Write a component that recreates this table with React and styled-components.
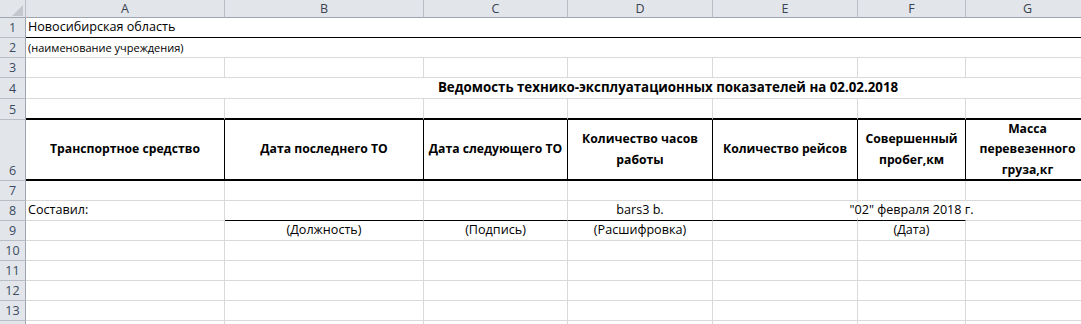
import React from "react";
import styled, { createGlobalStyle, css } from "styled-components";

const GlobalStyle = createGlobalStyle`
  html, body {
    margin: 0;
    padding: 0;
    background: #ffffff;
    overflow: hidden;
  }
  body {
    font-family: "Open Sans", "Liberation Sans", sans-serif;
    color: #000;
  }
`;

const TRACKS = "26px 199px 199px 144px 145px 145px 108px 124px";
const GRID = "#d9d9d9";
const HEAD_BORDER = "#b9bec6";
const HEAD_BG = "#e2e5e9";

const Sheet = styled.div`
  display: flex;
  flex-direction: column;
  width: max-content;
`;

const Row = styled.div`
  display: grid;
  grid-template-columns: ${TRACKS};
  grid-template-rows: ${(p) => p.$h}px;
  height: ${(p) => p.$h}px;
  flex: none;
`;

const Corner = styled.div`
  box-sizing: border-box;
  background: ${HEAD_BG};
  border-right: 1px solid ${HEAD_BORDER};
  border-bottom: 1px solid #9ea5ae;
  display: flex;
  align-items: flex-end;
  justify-content: flex-end;
  padding: 0 2px 1px 0;
`;

const CornerMark = styled.span`
  width: 0;
  height: 0;
  border-left: 11px solid transparent;
  border-bottom: 11px solid #c3c7cd;
`;

const ColHead = styled.div`
  box-sizing: border-box;
  background: ${HEAD_BG};
  border-right: 1px solid ${HEAD_BORDER};
  border-bottom: 1px solid #9ea5ae;
  display: flex;
  align-items: center;
  justify-content: center;
  font-size: 12.5px;
  color: #3a4352;
  line-height: 1;
  padding-top: 1px;
`;

const RowHead = styled.div`
  box-sizing: border-box;
  background: ${HEAD_BG};
  border-right: 1px solid #9ea5ae;
  border-bottom: 1px solid ${HEAD_BORDER};
  display: flex;
  align-items: flex-end;
  justify-content: center;
  font-size: 12.5px;
  color: #3a4a63;
  line-height: 1;
  padding-bottom: 3px;
`;

const bottomStyles = {
  grid: css`border-bottom: 1px solid ${GRID};`,
  thin: css`border-bottom: 1px solid #000;`,
  thick: css`border-bottom: 2px solid #000;`,
  none: css`border-bottom: 0;`,
};

const rightStyles = {
  grid: css`border-right: 1px solid ${GRID};`,
  black: css`border-right: 1px solid #000;`,
  none: css`border-right: 1px solid transparent;`,
};

const Cell = styled.div`
  box-sizing: border-box;
  grid-column: span ${(p) => p.$span || 1};
  ${(p) => bottomStyles[p.$bottom || "grid"]}
  ${(p) => rightStyles[p.$right || "grid"]}
  display: flex;
  align-items: ${(p) => (p.$valign === "center" ? "center" : "flex-end")};
  justify-content: ${(p) => (p.$align === "center" ? "center" : "flex-start")};
  padding: 0 2px 2px 2px;
  font-size: ${(p) => p.$size || 12.6}px;
  font-weight: ${(p) => (p.$bold ? 700 : 400)};
  line-height: 1.25;
  white-space: nowrap;
  min-width: 0;
  min-height: 0;
`;

const HeaderCell = styled(Cell)`
  white-space: normal;
  text-align: center;
  padding: 0 1px;
  font-size: 12.2px;
  line-height: 20.5px;
  overflow: visible;
`;

const TitleCell = styled(Cell)`
  padding-left: 223px;
  padding-bottom: 2px;
  font-size: 13.3px;
`;

const Overflow = styled.span`
  background: #fff;
`;

const COLS = ["A", "B", "C", "D", "E", "F", "G"];

const headers = [
  "Транспортное средство",
  "Дата последнего ТО",
  "Дата следующего ТО",
  "Количество часов работы",
  "Количество рейсов",
  "Совершенный пробег,км",
  "Масса перевезенного груза,кг",
];

function EmptyCells({ count = 7, bottom }) {
  return Array.from({ length: count }, (_, i) => (
    <Cell key={i} $bottom={bottom} />
  ));
}

export default function App() {
  return (
    <>
      <GlobalStyle />
      <Sheet>
        <Row $h={18}>
          <Corner>
            <CornerMark />
          </Corner>
          {COLS.map((c) => (
            <ColHead key={c}>{c}</ColHead>
          ))}
        </Row>

        <Row $h={20}>
          <RowHead>1</RowHead>
          <Cell $span={7} $bottom="thin" $right="none">
            Новосибирская область
          </Cell>
        </Row>

        <Row $h={20}>
          <RowHead>2</RowHead>
          <Cell $span={7} $right="none" $size={11}>
            (наименование учреждения)
          </Cell>
        </Row>

        <Row $h={20}>
          <RowHead>3</RowHead>
          <EmptyCells />
        </Row>

        <Row $h={21}>
          <RowHead>4</RowHead>
          <TitleCell $span={7} $align="center" $right="none" $bold>
            Ведомость технико-эксплуатационных показателей на 02.02.2018
          </TitleCell>
        </Row>

        <Row $h={21}>
          <RowHead>5</RowHead>
          <EmptyCells bottom="thick" />
        </Row>

        <Row $h={61}>
          <RowHead>6</RowHead>
          {headers.map((h, i) => (
            <HeaderCell
              key={h}
              $bold
              $align="center"
              $valign="center"
              $bottom="thick"
              $right={i < 6 ? "black" : "none"}
            >
              {h}
            </HeaderCell>
          ))}
        </Row>

        <Row $h={20}>
          <RowHead>7</RowHead>
          <EmptyCells />
        </Row>

        <Row $h={20}>
          <RowHead>8</RowHead>
          <Cell>Составил:</Cell>
          <Cell $bottom="thin" />
          <Cell $bottom="thin" />
          <Cell $bottom="thin" $align="center">
            bars3 b.
          </Cell>
          <Cell $bottom="thin" />
          <Cell $bottom="thin" $align="center" $right="none">
            <Overflow>"02" февраля 2018 г.</Overflow>
          </Cell>
          <Cell />
        </Row>

        <Row $h={20}>
          <RowHead>9</RowHead>
          <Cell />
          <Cell $align="center">(Должность)</Cell>
          <Cell $align="center">(Подпись)</Cell>
          <Cell $align="center">(Расшифровка)</Cell>
          <Cell />
          <Cell $align="center">(Дата)</Cell>
          <Cell />
        </Row>

        {[10, 11, 12, 13].map((n) => (
          <Row key={n} $h={20}>
            <RowHead>{n}</RowHead>
            <EmptyCells />
          </Row>
        ))}

        {/* next row starts at the bottom edge of the window; its label sits below it */}
        <Row $h={20}>
          <RowHead />
          <EmptyCells />
        </Row>
      </Sheet>
    </>
  );
}
